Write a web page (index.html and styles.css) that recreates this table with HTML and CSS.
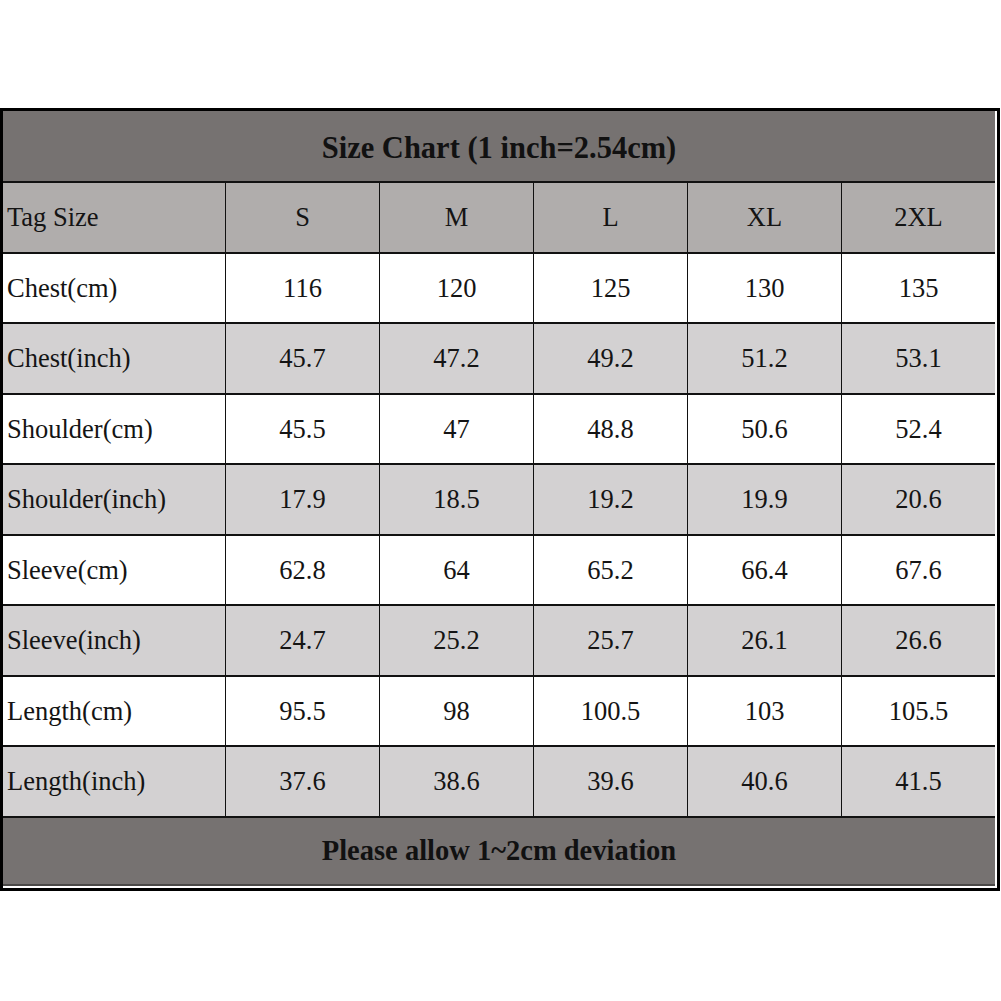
FILE: index.html
```html
<!DOCTYPE html>
<html lang="en">
<head>
<meta charset="utf-8">
<title>Size Chart</title>
<link rel="stylesheet" href="styles.css">
</head>
<body>
<div class="frame">
  <div class="chart">
    <div class="title">Size Chart (1 inch=2.54cm)</div>

    <div class="c lbl head">Tag Size</div>
    <div class="c head">S</div><div class="c head">M</div><div class="c head">L</div><div class="c head">XL</div><div class="c head">2XL</div>

    <div class="c lbl">Chest(cm)</div>
    <div class="c">116</div><div class="c">120</div><div class="c">125</div><div class="c">130</div><div class="c">135</div>

    <div class="c lbl alt">Chest(inch)</div>
    <div class="c alt">45.7</div><div class="c alt">47.2</div><div class="c alt">49.2</div><div class="c alt">51.2</div><div class="c alt">53.1</div>

    <div class="c lbl">Shoulder(cm)</div>
    <div class="c">45.5</div><div class="c">47</div><div class="c">48.8</div><div class="c">50.6</div><div class="c">52.4</div>

    <div class="c lbl alt">Shoulder(inch)</div>
    <div class="c alt">17.9</div><div class="c alt">18.5</div><div class="c alt">19.2</div><div class="c alt">19.9</div><div class="c alt">20.6</div>

    <div class="c lbl">Sleeve(cm)</div>
    <div class="c">62.8</div><div class="c">64</div><div class="c">65.2</div><div class="c">66.4</div><div class="c">67.6</div>

    <div class="c lbl alt">Sleeve(inch)</div>
    <div class="c alt">24.7</div><div class="c alt">25.2</div><div class="c alt">25.7</div><div class="c alt">26.1</div><div class="c alt">26.6</div>

    <div class="c lbl">Length(cm)</div>
    <div class="c">95.5</div><div class="c">98</div><div class="c">100.5</div><div class="c">103</div><div class="c">105.5</div>

    <div class="c lbl alt">Length(inch)</div>
    <div class="c alt">37.6</div><div class="c alt">38.6</div><div class="c alt">39.6</div><div class="c alt">40.6</div><div class="c alt">41.5</div>

    <div class="footer">Please allow 1~2cm deviation</div>
  </div>
</div>
</body>
</html>
```

FILE: styles.css
```css
html, body {
  margin: 0;
  padding: 0;
  background: #ffffff;
}

body {
  font-family: "Liberation Serif", "Times New Roman", serif;
  color: #141414;
}

.frame {
  margin-top: 108px;
  width: 992px;
  border: 3px solid #000;
  padding: 0 2px 2px 0;
  background: #ffffff;
  box-sizing: content-box;
}

.chart {
  display: grid;
  grid-template-columns: 222px repeat(5, 154px);
  grid-template-rows: 70px repeat(10, 70.5px);
}

.title,
.footer {
  grid-column: 1 / -1;
  background: #767271;
  display: flex;
  align-items: center;
  justify-content: center;
  font-weight: bold;
  font-size: 30.5px;
  color: #111;
  box-sizing: border-box;
}

.title {
  padding-top: 4px;
}

.footer {
  font-size: 28.5px;
  border-top: 2px solid #111;
  border-bottom: 2px solid #4a4847;
}

.c {
  box-sizing: border-box;
  border-top: 2px solid #111;
  border-left: 1px solid #111;
  display: flex;
  align-items: center;
  justify-content: center;
  font-size: 26.5px;
  background: #ffffff;
  padding-top: 1px;
}

.c.lbl {
  border-left: none;
  justify-content: flex-start;
  padding-left: 4px;
}

.c.head {
  background: #b0adac;
}

.c.alt {
  background: #d3d1d2;
}
```
